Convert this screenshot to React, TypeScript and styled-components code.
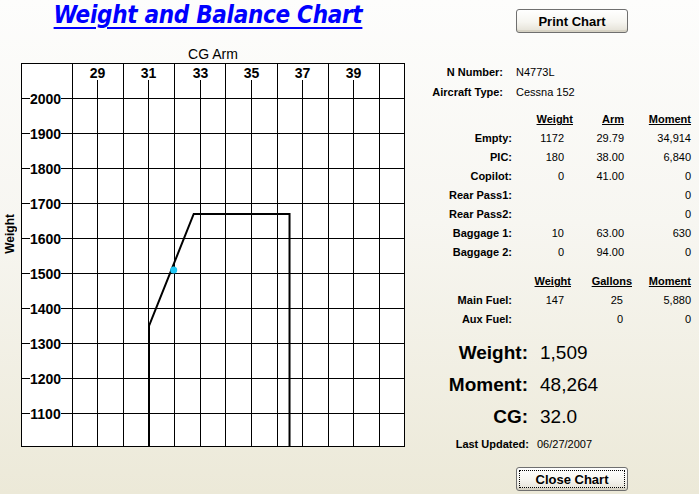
import React from "react";
import styled, { createGlobalStyle, css } from "styled-components";

const GlobalStyle = createGlobalStyle`
  html, body { margin: 0; padding: 0; }
  body { font-family: "Liberation Sans", Arial, sans-serif; color: #000; }
`;

const Page = styled.div`
  width: 699px;
  height: 494px;
  display: flex;
  overflow: hidden;
  background: linear-gradient(to bottom, #fdfdfc 0%, #f7f6f1 45%, #ece9d8 100%);
`;

const LeftColumn = styled.div`
  width: 420px;
  display: flex;
  flex-direction: column;
`;

const Title = styled.h1`
  margin: 0;
  width: 416px;
  height: 46px;
  text-align: center;
  font-family: "DejaVu Sans Condensed", "DejaVu Sans", sans-serif;
  font-stretch: condensed;
  font-style: italic;
  font-weight: bold;
  font-size: 24px;
  line-height: 30px;
  letter-spacing: -0.3px;
  color: #0000ff;
  text-decoration: underline;
  text-decoration-thickness: 2px;
  text-underline-offset: 4px;
`;

const ChartGrid = styled.div`
  display: grid;
  grid-template-columns: 21px 384px;
  grid-template-rows: 17px 384px;
`;

const AxisTitle = styled.div`
  grid-column: 2;
  grid-row: 1;
  text-align: center;
  font-size: 14px;
  line-height: 17px;
`;

const WeightAxis = styled.div`
  grid-column: 1;
  grid-row: 2;
  align-self: center;
  justify-self: center;
  margin-bottom: 43px;
  writing-mode: vertical-rl;
  transform: rotate(180deg);
  font-size: 12px;
  font-weight: bold;
  line-height: 21px;
`;

const ChartSvg = styled.svg`
  grid-column: 2;
  grid-row: 2;
  display: block;
  background: #fff;
`;

const RightColumn = styled.div`
  width: 279px;
  display: flex;
  flex-direction: column;
`;

const ButtonRow = styled.div<{ $top: number }>`
  display: flex;
  padding-left: 96px;
  margin-top: ${(p) => p.$top}px;
`;

const Button = styled.button<{ $focused?: boolean }>`
  width: 112px;
  height: 24px;
  padding: 0;
  border: 1px solid #6f6f6f;
  border-radius: 3px;
  background: linear-gradient(to bottom, #ffffff 0%, #f6f5f0 55%, #e3e0d5 100%);
  box-shadow: inset 0 -2px 0 #d6d2c4;
  font-family: "Liberation Sans", Arial, sans-serif;
  font-weight: bold;
  font-size: 13px;
  color: #000;
  ${(p) =>
    p.$focused &&
    css`
      outline: 1px dotted #000;
      outline-offset: -4px;
    `}
`;

const InfoBlock = styled.div`
  margin-top: 29px;
  display: grid;
  grid-template-columns: 83px auto;
  column-gap: 13px;
  grid-auto-rows: 20px;
  align-items: center;
  font-size: 11px;
`;

const Label = styled.span`
  font-weight: bold;
  text-align: right;
  white-space: nowrap;
`;

const Value = styled.span`
  white-space: nowrap;
`;

const DataTable = styled.div<{ $cols: string; $top: number }>`
  margin-top: ${(p) => p.$top}px;
  display: grid;
  grid-template-columns: ${(p) => p.$cols};
  grid-auto-rows: 19px;
  align-items: center;
  font-size: 11px;
  line-height: 19px;
`;

const HeadCell = styled.span`
  font-weight: bold;
  text-decoration: underline;
  text-align: right;
  white-space: nowrap;
`;

const RowLabel = styled.span`
  font-weight: bold;
  text-align: right;
  white-space: nowrap;
`;

const NumCell = styled.span<{ $pad?: number }>`
  text-align: right;
  padding-right: ${(p) => p.$pad ?? 0}px;
  white-space: nowrap;
`;

const Totals = styled.div`
  margin-top: 8px;
  display: grid;
  grid-template-columns: 108px auto;
  column-gap: 12px;
  grid-auto-rows: 32px;
  align-items: center;
  font-size: 19px;
`;

const TotalLabel = styled.span`
  font-weight: bold;
  text-align: right;
`;

const Updated = styled.div`
  margin-top: 3px;
  display: grid;
  grid-template-columns: 109px auto;
  column-gap: 8px;
  height: 16px;
  align-items: center;
  font-size: 11px;
`;

const ARM_LINES: { arm: number; x: number }[] = [
  { arm: 28, x: 51 },
  { arm: 29, x: 76 },
  { arm: 30, x: 102 },
  { arm: 31, x: 127 },
  { arm: 32, x: 153 },
  { arm: 33, x: 179 },
  { arm: 34, x: 204 },
  { arm: 35, x: 230 },
  { arm: 36, x: 256 },
  { arm: 37, x: 281 },
  { arm: 38, x: 307 },
  { arm: 39, x: 332 },
  { arm: 40, x: 358 },
];

const WEIGHTS = [2000, 1900, 1800, 1700, 1600, 1500, 1400, 1300, 1200, 1100];

const armX = (arm: number) => 128 + (arm - 31) * 25.55;
const weightY = (w: number) => (2100 - w) * 0.35 + 0.5;

function Chart() {
  const env = [
    [armX(31), 384],
    [armX(31), weightY(1350)],
    [armX(32.75), weightY(1670)],
    [armX(36.5), weightY(1670)],
    [armX(36.5), 384],
  ]
    .map((p) => p.join(","))
    .join(" ");
  return (
    <ChartSvg width={384} height={384} viewBox="0 0 384 384">
      <g stroke="#000" strokeWidth={1} shapeRendering="crispEdges">
        {ARM_LINES.map((l) => {
          const labeled = l.arm % 2 === 1;
          return (
            <line
              key={l.arm}
              x1={l.x + 0.5}
              x2={l.x + 0.5}
              y1={labeled ? 17 : 0}
              y2={384}
            />
          );
        })}
        {WEIGHTS.map((w) => {
          const y = (2100 - w) * 0.35 + 0.5;
          return (
            <g key={w}>
              <line x1={0} x2={9} y1={y} y2={y} />
              <line x1={40} x2={384} y1={y} y2={y} />
            </g>
          );
        })}
        <rect x={0.5} y={0.5} width={383} height={383} fill="none" />
      </g>
      <g
        fontFamily="'Liberation Sans', Arial, sans-serif"
        fontWeight="bold"
        fontSize={14}
        fill="#000"
        textAnchor="middle"
      >
        {ARM_LINES.filter((l) => l.arm % 2 === 1).map((l) => (
          <text key={l.arm} x={l.x + 0.5} y={15}>
            {l.arm}
          </text>
        ))}
        {WEIGHTS.map((w) => (
          <text key={w} x={24.5} y={(2100 - w) * 0.35 + 5.5}>
            {w}
          </text>
        ))}
      </g>
      <polyline
        points={env}
        fill="none"
        stroke="#000"
        strokeWidth={2}
        strokeLinejoin="miter"
      />
      <circle cx={152.7} cy={207} r={3.5} fill="#1ec8f5" />
    </ChartSvg>
  );
}

const ITEMS: { label: string; weight: string; arm: string; moment: string }[] = [
  { label: "Empty:", weight: "1172", arm: "29.79", moment: "34,914" },
  { label: "PIC:", weight: "180", arm: "38.00", moment: "6,840" },
  { label: "Copilot:", weight: "0", arm: "41.00", moment: "0" },
  { label: "Rear Pass1:", weight: "", arm: "", moment: "0" },
  { label: "Rear Pass2:", weight: "", arm: "", moment: "0" },
  { label: "Baggage 1:", weight: "10", arm: "63.00", moment: "630" },
  { label: "Baggage 2:", weight: "0", arm: "94.00", moment: "0" },
];

const FUEL: { label: string; weight: string; gallons: string; moment: string }[] = [
  { label: "Main Fuel:", weight: "147", gallons: "25", moment: "5,880" },
  { label: "Aux Fuel:", weight: "", gallons: "0", moment: "0" },
];

export default function App() {
  return (
    <>
      <GlobalStyle />
      <Page>
        <LeftColumn>
          <Title>Weight and Balance Chart</Title>
          <ChartGrid>
            <AxisTitle>CG Arm</AxisTitle>
            <WeightAxis>Weight</WeightAxis>
            <Chart />
          </ChartGrid>
        </LeftColumn>
        <RightColumn>
          <ButtonRow $top={9}>
            <Button>Print Chart</Button>
          </ButtonRow>
          <InfoBlock>
            <Label>N Number:</Label>
            <Value>N4773L</Value>
            <Label>Aircraft Type:</Label>
            <Value>Cessna 152</Value>
          </InfoBlock>
          <DataTable $cols="92px 61px 51px 67px" $top={8}>
            <span />
            <HeadCell>Weight</HeadCell>
            <HeadCell>Arm</HeadCell>
            <HeadCell>Moment</HeadCell>
            {ITEMS.map((r) => (
              <React.Fragment key={r.label}>
                <RowLabel>{r.label}</RowLabel>
                <NumCell $pad={9}>{r.weight}</NumCell>
                <NumCell>{r.arm}</NumCell>
                <NumCell>{r.moment}</NumCell>
              </React.Fragment>
            ))}
          </DataTable>
          <DataTable $cols="92px 59px 61px 59px" $top={10}>
            <span />
            <HeadCell>Weight</HeadCell>
            <HeadCell>Gallons</HeadCell>
            <HeadCell>Moment</HeadCell>
            {FUEL.map((r) => (
              <React.Fragment key={r.label}>
                <RowLabel>{r.label}</RowLabel>
                <NumCell $pad={7}>{r.weight}</NumCell>
                <NumCell $pad={9}>{r.gallons}</NumCell>
                <NumCell>{r.moment}</NumCell>
              </React.Fragment>
            ))}
          </DataTable>
          <Totals>
            <TotalLabel>Weight:</TotalLabel>
            <Value>1,509</Value>
            <TotalLabel>Moment:</TotalLabel>
            <Value>48,264</Value>
            <TotalLabel>CG:</TotalLabel>
            <Value>32.0</Value>
          </Totals>
          <Updated>
            <Label>Last Updated:</Label>
            <Value>06/27/2007</Value>
          </Updated>
          <ButtonRow $top={15}>
            <Button $focused>Close Chart</Button>
          </ButtonRow>
        </RightColumn>
      </Page>
    </>
  );
}
